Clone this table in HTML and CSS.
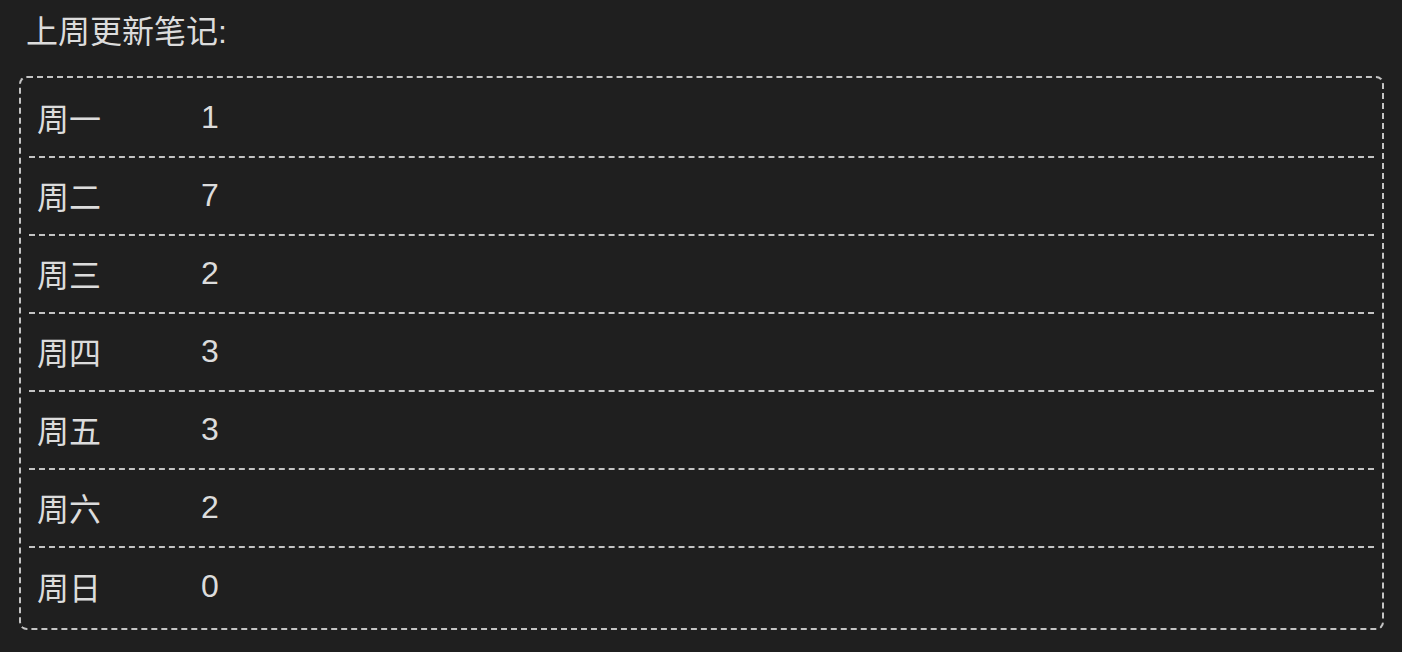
FILE: index.html
```html
<!DOCTYPE html>
<html lang="zh">
<head>
<meta charset="utf-8">
<title>上周更新笔记</title>
<link rel="stylesheet" href="styles.css">
</head>
<body>
<div class="page">
  <div class="title">上周更新笔记:</div>
  <div class="table">
    <div class="row"><span class="day">周一</span><span class="num">1</span></div>
    <div class="row"><span class="day">周二</span><span class="num">7</span></div>
    <div class="row"><span class="day">周三</span><span class="num">2</span></div>
    <div class="row"><span class="day">周四</span><span class="num">3</span></div>
    <div class="row"><span class="day">周五</span><span class="num">3</span></div>
    <div class="row"><span class="day">周六</span><span class="num">2</span></div>
    <div class="row"><span class="day">周日</span><span class="num">0</span></div>
  </div>
</div>
</body>
</html>
```

FILE: styles.css
```css
html, body {
  margin: 0;
  padding: 0;
  background: #1f1f1f;
}
.page {
  padding: 8px 18px 0 19px;
  font-family: "Liberation Sans", "Noto Sans CJK SC", sans-serif;
  color: #dcdcdc;
  font-size: 32px;
}
.title {
  line-height: 48px;
  padding-left: 7px;
}
.table {
  margin-top: 20px;
  border: 2px dashed #c4c4c4;
  border-radius: 8px;
  padding: 2px 8px;
}
.row {
  display: grid;
  grid-template-columns: 163px 1fr;
  align-items: center;
  height: 78px;
  box-sizing: border-box;
  padding-left: 8px;
  padding-bottom: 2px;
  border-bottom: 2px dashed #c4c4c4;
}
.row:last-child {
  border-bottom: none;
}
.num {
  padding-left: 1px;
}
```
